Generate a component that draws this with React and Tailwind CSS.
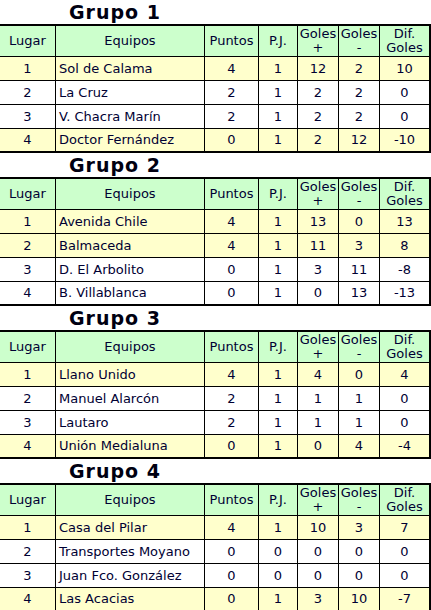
import React from 'react';

const groups = [
  {
    name: 'Grupo 1',
    rows: [
      ['1', 'Sol de Calama', '4', '1', '12', '2', '10', true],
      ['2', 'La Cruz', '2', '1', '2', '2', '0', false],
      ['3', 'V. Chacra Marín', '2', '1', '2', '2', '0', false],
      ['4', 'Doctor Fernández', '0', '1', '2', '12', '-10', true],
    ],
  },
  {
    name: 'Grupo 2',
    rows: [
      ['1', 'Avenida Chile', '4', '1', '13', '0', '13', true],
      ['2', 'Balmaceda', '4', '1', '11', '3', '8', true],
      ['3', 'D. El Arbolito', '0', '1', '3', '11', '-8', false],
      ['4', 'B. Villablanca', '0', '1', '0', '13', '-13', false],
    ],
  },
  {
    name: 'Grupo 3',
    rows: [
      ['1', 'Llano Unido', '4', '1', '4', '0', '4', true],
      ['2', 'Manuel Alarcón', '2', '1', '1', '1', '0', false],
      ['3', 'Lautaro', '2', '1', '1', '1', '0', false],
      ['4', 'Unión Medialuna', '0', '1', '0', '4', '-4', true],
    ],
  },
  {
    name: 'Grupo 4',
    rows: [
      ['1', 'Casa del Pilar', '4', '1', '10', '3', '7', true],
      ['2', 'Transportes Moyano', '0', '0', '0', '0', '0', false],
      ['3', 'Juan Fco. González', '0', '0', '0', '0', '0', false],
      ['4', 'Las Acacias', '0', '1', '3', '10', '-7', true],
    ],
  },
];

const cols = 'grid grid-cols-[56px_149px_54px_39px_41px_41px_51px]';
const cell = 'border-r border-black flex items-center justify-center';

const GroupTable = ({ group }) => (
  <div>
    <div className="h-[24px] w-[230px] text-center text-[19px] font-bold tracking-[1px] leading-[24px] text-[#000011]">
      {group.name}
    </div>
    <div className="border-t-2 border-black">
      <div className={`${cols} h-[31px] border-b border-black bg-[#ccffcc] leading-[14px]`}>
        <div className={cell}>Lugar</div>
        <div className={cell}>Equipos</div>
        <div className={cell}>Puntos</div>
        <div className={cell}>P.J.</div>
        <div className={`${cell} flex-col`}>
          <span>Goles</span>
          <span>+</span>
        </div>
        <div className={`${cell} flex-col`}>
          <span>Goles</span>
          <span>-</span>
        </div>
        <div className="border-r-2 border-black flex flex-col items-center justify-center">
          <span>Dif.</span>
          <span>Goles</span>
        </div>
      </div>
      {group.rows.map((r, i) => (
        <div
          key={i}
          className={`${cols} h-[24px] ${i === 3 ? 'border-b-2' : 'border-b'} border-black ${
            r[7] ? 'bg-[#ffffcc]' : 'bg-white'
          }`}
        >
          <div className={cell}>{r[0]}</div>
          <div className="border-r border-black flex items-center pl-[3px] whitespace-nowrap">{r[1]}</div>
          <div className={cell}>{r[2]}</div>
          <div className={cell}>{r[3]}</div>
          <div className={cell}>{r[4]}</div>
          <div className={cell}>{r[5]}</div>
          <div className="border-r-2 border-black flex items-center justify-center">{r[6]}</div>
        </div>
      ))}
    </div>
  </div>
);

export default function App() {
  return (
    <div className="w-[431px] bg-white text-[13px] text-[#000033] font-['DejaVu_Sans',sans-serif]">
      {groups.map((g) => (
        <GroupTable key={g.name} group={g} />
      ))}
    </div>
  );
}
